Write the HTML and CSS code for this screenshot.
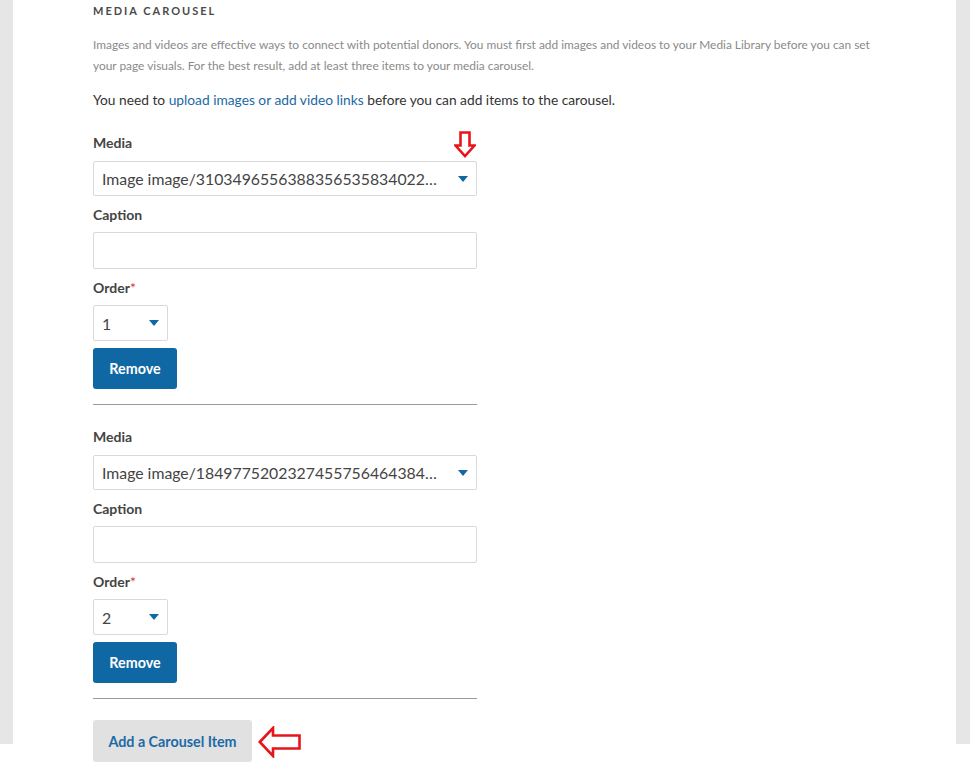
FILE: index.html
```
<!DOCTYPE html>
<html lang="en">
<head>
  <meta charset="UTF-8">
  <title>Media Carousel</title>
  <link rel="stylesheet" href="styles.css">
</head>
<body>
  <div class="page">
    <div class="panel">
      <section class="carousel-section">
        <h2 class="section-title">Media Carousel</h2>
        <p class="section-help">Images and videos are effective ways to connect with potential donors. You must first add images and videos to your Media Library before you can set your page visuals. For the best result, add at least three items to your media carousel.</p>
        <p class="section-note">You need to <a href="#">upload images or add video links</a> before you can add items to the carousel.</p>

        <div class="carousel-item">
          <label class="field-label">Media</label>
          <div class="select-box wide">
            <span class="select-value">Image image/3103496556388356535834022157640931</span>
            <span class="caret"></span>
          </div>
          <label class="field-label">Caption</label>
          <div class="text-input"></div>
          <label class="field-label">Order<span class="req">*</span></label>
          <div class="select-box narrow">
            <span class="select-value">1</span>
            <span class="caret"></span>
          </div>
          <button class="btn btn-primary">Remove</button>
          <hr class="item-rule">
        </div>

        <div class="carousel-item">
          <label class="field-label">Media</label>
          <div class="select-box wide">
            <span class="select-value">Image image/1849775202327455756464384219057362</span>
            <span class="caret"></span>
          </div>
          <label class="field-label">Caption</label>
          <div class="text-input"></div>
          <label class="field-label">Order<span class="req">*</span></label>
          <div class="select-box narrow">
            <span class="select-value">2</span>
            <span class="caret"></span>
          </div>
          <button class="btn btn-primary">Remove</button>
          <hr class="item-rule">
        </div>

        <button class="btn btn-secondary">Add a Carousel Item</button>
      </section>
    </div>

    <!-- annotation arrows -->
    <svg class="note-arrow arrow-down" width="22" height="27" viewBox="0 0 22 27">
      <path d="M6.5 1.5 H15.5 V14.5 H20.5 L11 25 L1.5 14.5 H6.5 Z" fill="#fff" stroke="#e8141c" stroke-width="2.6" stroke-linejoin="miter"/>
    </svg>
    <svg class="note-arrow arrow-left" width="44" height="32" viewBox="0 0 44 32">
      <path d="M1.8 16 L15 2 V9.5 H41.5 V22.5 H15 V30 Z" fill="#fff" stroke="#e8141c" stroke-width="2.6" stroke-linejoin="miter"/>
    </svg>
  </div>
</body>
</html>
```

FILE: styles.css
```
:root {
  --page-bg: #e6e6e6;
  --panel-bg: #ffffff;
  --text: #333333;
  --muted: #8a8a8a;
  --title: #4a4a4a;
  --link: #1b6aa6;
  --border: #d9d9d9;
  --primary: #0f67a3;
  --secondary-bg: #e1e1e1;
  --rule: #9a9a9a;
  --req: #d9342b;
}

body {
  margin: 0;
  padding: 0;
  font-family: Lato, "Open Sans", Arial, sans-serif;
  color: var(--text);
  background: #ffffff;
}

/* gray side strips stop at 744px, the panel keeps going */
.page {
  position: relative;
  background: linear-gradient(var(--page-bg), var(--page-bg)) no-repeat top left / 100% 744px;
  padding: 0 14px 0 13px;
}

.panel {
  background: var(--panel-bg);
  padding-bottom: 8px;
}

.carousel-section {
  padding: 3px 0 0 80px;
}

.section-title {
  margin: 0;
  font-size: 11px;
  line-height: 16px;
  font-weight: 700;
  letter-spacing: 2px;
  text-transform: uppercase;
  color: var(--title);
}

.section-help {
  margin: 15px 0 0;
  max-width: 790px;
  font-size: 11.9px;
  line-height: 21px;
  color: var(--muted);
}

.section-note {
  margin: 14px 0 0;
  font-size: 13.75px;
  line-height: 20px;
  color: var(--text);
}

.section-note a {
  color: var(--link);
  text-decoration: none;
}

.carousel-item {
  width: 384px;
  padding-top: 23px;
}

.carousel-item + .carousel-item {
  padding-top: 22px;
}

.field-label {
  display: block;
  font-size: 14px;
  line-height: 20px;
  font-weight: 700;
  color: #444;
  margin-bottom: 7px;
}

.field-label:first-child {
  margin-bottom: 8px;
}

.req {
  color: var(--req);
  font-weight: 400;
}

.select-box {
  display: flex;
  align-items: center;
  box-sizing: border-box;
  border: 1px solid var(--border);
  border-radius: 2px;
  background: #fff;
  padding: 0 8px 0 8px;
  margin-bottom: 9px;
}

.select-box.wide {
  width: 384px;
  height: 35px;
}

.select-box.narrow {
  width: 75px;
  height: 36px;
  margin-bottom: 7px;
}

.select-value {
  flex: 1;
  min-width: 0;
  font-size: 15.8px;
  color: #444;
  white-space: nowrap;
  overflow: hidden;
  text-overflow: ellipsis;
  padding-right: 13px;
}

.caret {
  width: 0;
  height: 0;
  border-left: 5px solid transparent;
  border-right: 5px solid transparent;
  border-top: 6px solid var(--primary);
}

.text-input {
  box-sizing: border-box;
  width: 384px;
  height: 37px;
  border: 1px solid var(--border);
  border-radius: 2px;
  margin-bottom: 9px;
}

.btn {
  display: block;
  font-family: inherit;
  font-size: 14.3px;
  font-weight: 700;
  border: none;
  border-radius: 3px;
  cursor: pointer;
}

.btn-primary {
  width: 84px;
  height: 41px;
  background: var(--primary);
  color: #fff;
}

.btn-secondary {
  width: 159px;
  height: 42px;
  margin-top: 21px;
  background: var(--secondary-bg);
  color: var(--link);
}

.item-rule {
  margin: 15px 0 0;
  border: none;
  border-top: 1px solid var(--rule);
  height: 0;
}

.note-arrow {
  position: absolute;
}

.arrow-down {
  left: 454px;
  top: 131px;
}

.arrow-left {
  left: 258px;
  top: 726px;
}
```
